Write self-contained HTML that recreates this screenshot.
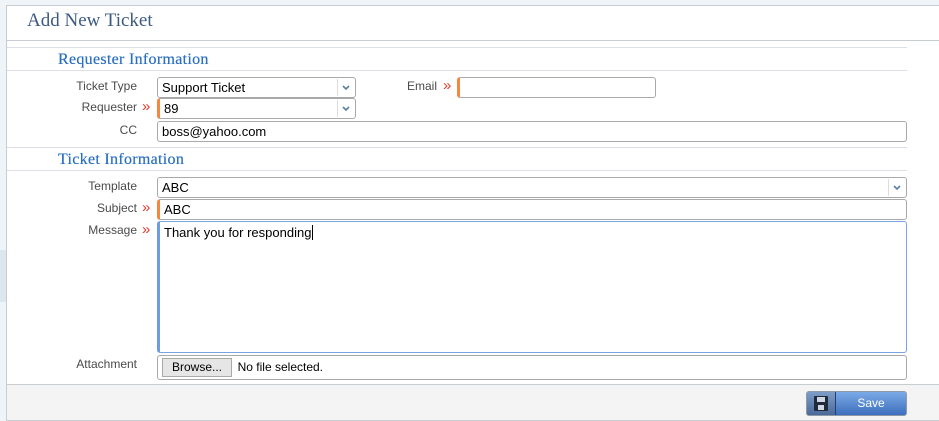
<!DOCTYPE html>
<html><head><style>
body{margin:0;width:939px;height:421px;background:#eef4f7;position:relative;overflow:hidden;font-family:"Liberation Sans",sans-serif}
.a{position:absolute}
.panel{left:6px;top:5px;width:933px;height:414px;background:#fff;border-top:1px solid #c8cdd2;border-left:1px solid #c8cdd2;border-bottom:1px solid #c8cdd2}
.lbl{position:absolute;font-size:12px;color:#4a4a4a;text-align:right;width:130px}
.inp{position:absolute;border:1px solid #a9a9a9;border-radius:3px;background:#fff;font-size:13px;color:#000;box-sizing:border-box;padding:2px 4px;height:21px;line-height:15px}
.req{border-left:3px solid #f5873e}
.arr{position:absolute;color:#e8392a;font-size:15px;letter-spacing:-3px}
.dd{position:absolute;right:1px;top:1px;width:16px;height:17px;border-left:1px solid #ddd}
.sec{position:absolute;left:58px;font-family:"Liberation Serif",serif;font-size:16px;color:#2a6fc2;letter-spacing:0.3px;text-shadow:0 0 0.4px #2a6fc2}
.hr{position:absolute;left:7px;width:900px;height:1px;background:#dcdfe8}
</style></head><body>
<div class="a" style="left:0;top:250px;width:6px;height:52px;background:#dbe6ee"></div>
<div class="a panel"></div>
<div class="a" style="left:7px;top:6px;width:932px;height:34px;background:#fff;border-bottom:1px solid #c8cdd2"></div>
<div class="a" style="left:27px;top:10px;font-family:'Liberation Serif',serif;font-size:19px;color:#3d5a80">Add New Ticket</div>
<div class="hr" style="top:47px"></div>
<div class="sec" style="top:51px">Requester Information</div>
<div class="hr" style="top:70px"></div>

<svg width="0" height="0" style="position:absolute"><defs><symbol id="chev" viewBox="0 0 16 17"><path d="M5 7 L8 10 L11 7" stroke="#5a7fa6" stroke-width="1.6" fill="none"/></symbol></defs></svg>

<div class="lbl" style="left:7px;top:79px">Ticket Type</div>
<div class="inp" style="left:157px;top:77px;width:199px">Support Ticket<svg class="dd"><use href="#chev"/></svg></div>
<div class="lbl" style="left:307px;top:79px">Email</div>
<div class="arr" style="left:443px;top:77px">»</div>
<div class="inp req" style="left:457px;top:77px;width:199px"></div>

<div class="lbl" style="left:7px;top:100px">Requester</div>
<div class="arr" style="left:142px;top:98px">»</div>
<div class="inp req" style="left:157px;top:98px;width:199px">89<svg class="dd"><use href="#chev"/></svg></div>

<div class="lbl" style="left:7px;top:123px">CC</div>
<div class="inp" style="left:157px;top:121px;width:750px">boss@yahoo.com</div>

<div class="hr" style="top:147px"></div>
<div class="sec" style="top:151px">Ticket Information</div>
<div class="hr" style="top:170px"></div>

<div class="lbl" style="left:7px;top:179px">Template</div>
<div class="inp" style="left:157px;top:177px;width:750px">ABC<svg class="dd"><use href="#chev"/></svg></div>
<div class="lbl" style="left:7px;top:201px">Subject</div>
<div class="arr" style="left:142px;top:199px">»</div>
<div class="inp req" style="left:157px;top:199px;width:750px">ABC</div>
<div class="lbl" style="left:7px;top:223px">Message</div>
<div class="arr" style="left:142px;top:221px">»</div>
<div class="inp" style="left:157px;top:221px;width:750px;height:132px;border:1px solid #7ba3e0;border-left:3px solid #6f9be0;padding:3px 4px">Thank you for responding<span style="border-left:1px solid #000;margin-left:1px"></span></div>

<div class="lbl" style="left:7px;top:357px">Attachment</div>
<div class="inp" style="left:157px;top:355px;width:750px;height:25px;padding:2px 4px"><span style="display:inline-block;width:68px;height:17px;background:#e6e6e6;border:1px solid #aaa;text-align:center;font-size:12px;line-height:17px">Browse...</span> <span style="font-size:12px;margin-left:2px">No file selected.</span></div>

<div class="a" style="left:7px;top:384px;width:932px;height:35px;background:#f4f4f4;border-top:1px solid #c8cdd2"></div>
<div class="a" style="left:806px;top:391px;width:99px;height:23px;border:1px solid #8e9aa8;border-radius:3px;background:linear-gradient(#7aaae6,#3d6fbd);overflow:hidden">
<div class="a" style="left:0;top:0;width:28px;height:23px;background:linear-gradient(#7d9cc8,#4a6a9a);border-right:1px solid #22406a"></div>
<div class="a" style="left:7px;top:4px;width:14px;height:15px;background:#1f2a3a;border-radius:1px"></div>
<div class="a" style="left:10px;top:5px;width:8px;height:5px;background:#cfd8e4"></div>
<div class="a" style="left:11px;top:13px;width:6px;height:5px;background:#cfd8e4"></div>
<div class="a" style="left:29px;top:0;width:70px;height:23px;line-height:23px;text-align:center;color:#fff;font-size:12px">Save</div>
</div>
</body></html>
